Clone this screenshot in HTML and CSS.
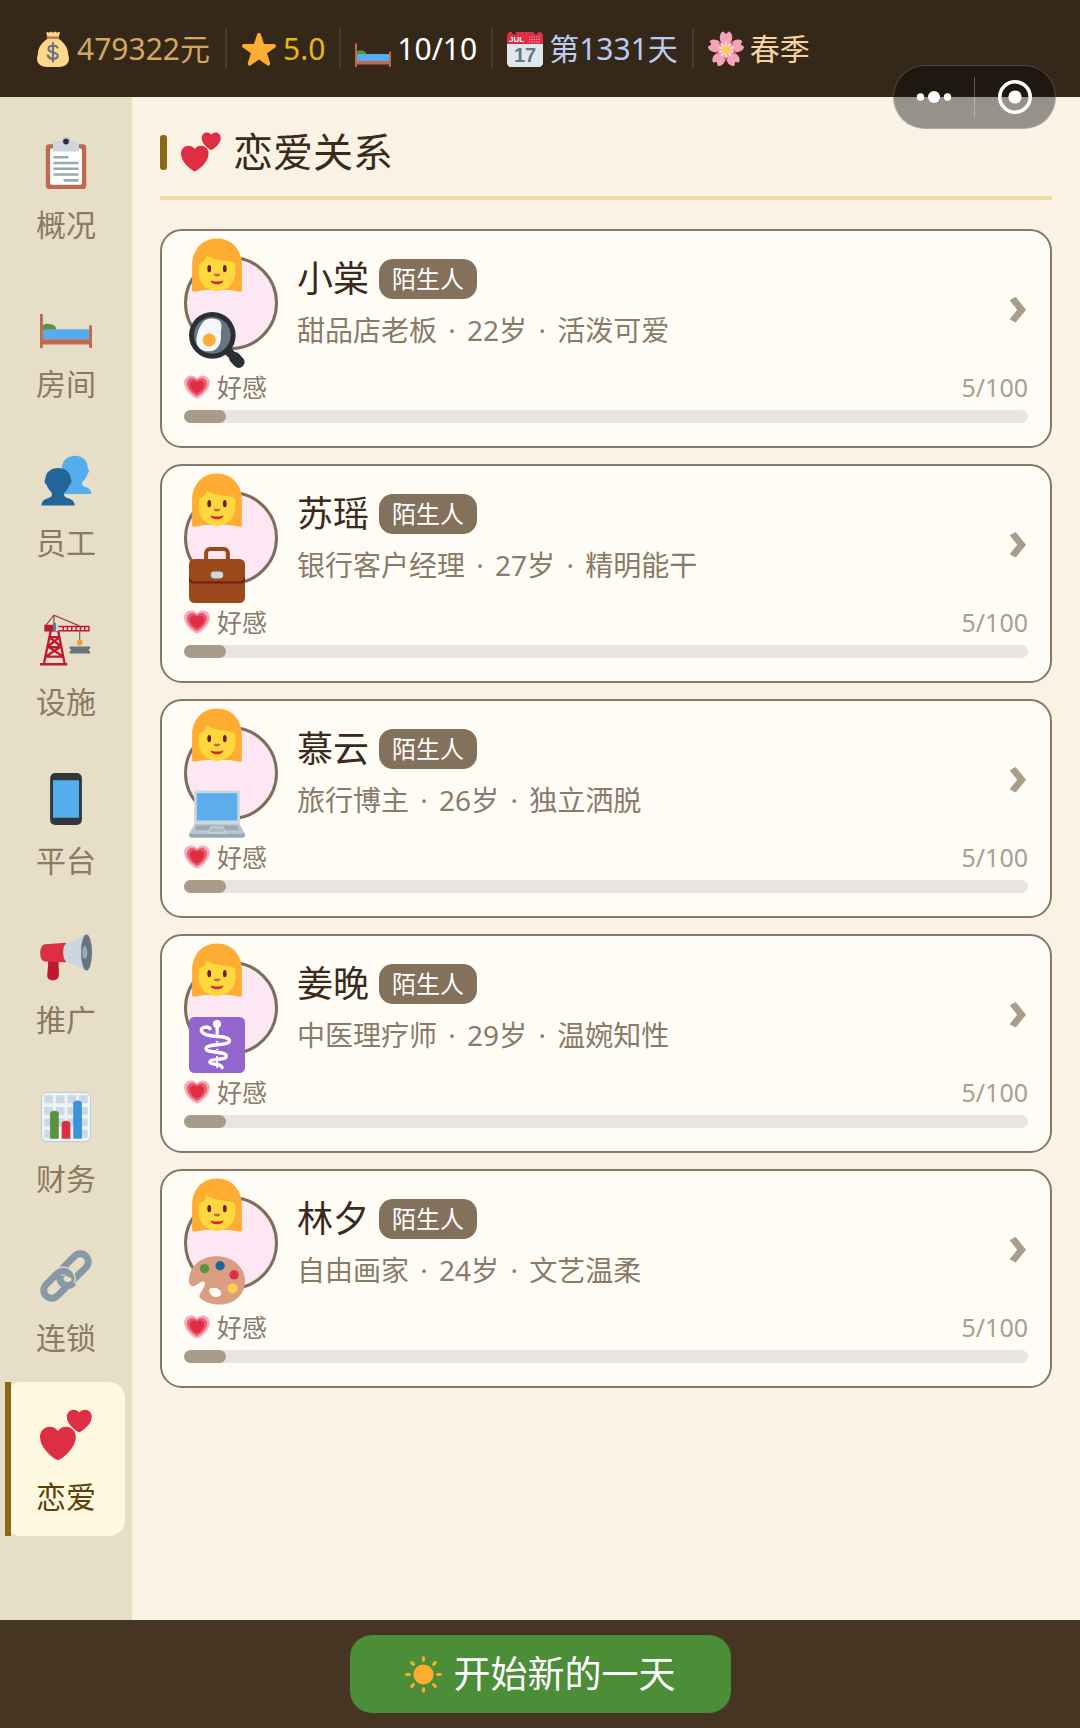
FILE: index.html
```
<!DOCTYPE html>
<html lang="zh-CN">
<head>
    <meta charset="UTF-8">
    <meta name="viewport" content="width=device-width, initial-scale=1.0">
    <title>恋爱关系</title>
    <link rel="stylesheet" href="styles.css">
</head>
<body>
    <!-- shared icons -->
    <svg class="icon-defs" aria-hidden="true">
        <symbol id="heart" viewBox="0 0 36 36">
            <path d="M35.885 11.833c0-5.45-4.418-9.868-9.867-9.868-3.308 0-6.227 1.633-8.018 4.129-1.791-2.496-4.71-4.129-8.017-4.129-5.45 0-9.868 4.417-9.868 9.868 0 .772.098 1.52.266 2.241C1.751 22.587 11.216 31.568 18 34.034c6.783-2.466 16.249-11.447 17.617-19.959.17-.721.268-1.469.268-2.242z"/>
        </symbol>
        <symbol id="hearts" viewBox="0 0 36 36">
            <g fill="#dd2e44">
                <path d="M12.400 35.500C6.800 32.700 0 26 0 19.300c0-4 3-7 6.800-7 2.300 0 4.300 1.100 5.600 2.900 1.300-1.800 3.300-2.900 5.600-2.900 3.800 0 6.800 3 6.800 7 0 6.700-6.800 13.400-12.400 16.200z"/>
                <path d="M27.200 16.200c-3.800-1.900-8.600-6.300-8.600-10.900C18.600 2.500 20.700.5 23.300.5c1.600 0 3 .8 3.900 2 .9-1.200 2.300-2 3.900-2 2.600 0 4.700 2 4.700 4.800 0 4.600-4.800 9-8.600 10.900z"/>
            </g>
        </symbol>
        <symbol id="growing-heart" viewBox="0 0 36 36">
            <use href="#heart" width="36" height="36" fill="#f4abba"/>
            <use href="#heart" x="4" y="4" width="28" height="28" fill="#ea596e"/>
            <use href="#heart" x="8" y="8" width="20" height="20" fill="#dd2e44"/>
        </symbol>
        <symbol id="woman" viewBox="0 0 36 36">
            <path fill="#ffac33" d="M18 .3C8.500.3 2 7.500 2 17.500v16c0 .8.500 1.200 1.300 1.100L10 33.500h16l6.700 1.100c.8.1 1.300-.3 1.300-1.100v-16C34 7.500 27.500.3 18 .3z"/>
            <path fill="#ffd83d" d="M6.500 16.500c2.500-1 4.700-3 5.200-5.300 4 3.300 12 3 16.300 4.300 1.500.5 1.900 1.500 1.900 3V22c0 7-5.500 12-11.900 12S6.200 29 6.200 22z"/>
            <ellipse fill="#662113" cx="13" cy="19.700" rx="1.200" ry="2.300"/>
            <ellipse fill="#662113" cx="23" cy="19.700" rx="1.200" ry="2.300"/>
            <path fill="#c1694f" d="M16.300 23h3.400c.8 0 .5 1.700-1.700 1.700s-2.500-1.700-1.700-1.700z"/>
            <path fill="#df1f32" d="M14 27.300c2 .9 6 .9 8 0 .3 1.200-1.500 2.400-4 2.400s-4.300-1.200-4-2.400z"/>
        </symbol>
        <symbol id="bed" viewBox="0 0 36 36">
            <path fill="#5c913b" d="M2 20.200c2.500-1.700 7-1 8.800 1.300.7 1 .2 2.500-1 2.500H2z"/>
            <path fill="#55acee" d="M2 25.500c0-1.500.8-2.500 2-2.500h29c.8 0 1.500.7 1.500 1.500V30H2z"/>
            <path fill="#c1694f" d="M0 12.500h2V30h32v-9.500h2V36h-2v-2.500H2V36H0z"/>
        </symbol>
    </svg>

    <header class="topbar">
        <div class="stat money">
            <svg viewBox="0 0 36 36" aria-hidden="true">
                <path fill="#fdd888" d="M12 .8l2 1 2-1.300 2 1.300 2-1.300 2 1.300 2.500-1c1.300 2-1.500 4.500-1.200 7C29 11 33 17.500 33 22c0 2 1 3.500 1 6 0 5-5 8-10 8H12c-5 0-10-3-10-8 0-2.500 1-4 1-6 0-4.500 4-11 9.700-14.200C13 5.300 10.500 3 12 .8z"/>
                <rect fill="#bf6952" x="11.500" y="5.500" width="13" height="2.300" rx="1.100"/>
                <path fill="none" stroke="#67757f" stroke-width="2.200" stroke-linecap="round" d="M22.500 16.500c-1-2.300-9-2.800-9 1.400 0 4.500 9.300 2.600 9.300 6.800 0 4.300-8.500 3.900-10-.2M18 12v18.500"/>
            </svg>
            <span>479322元</span>
        </div>
        <div class="stat rating">
            <svg viewBox="0 0 36 36" aria-hidden="true">
                <path fill="#ffac33" d="M27.287 34.627c-.404 0-.806-.124-1.152-.371L18 28.422l-8.135 5.834c-.343.247-.745.371-1.148.371-.406 0-.814-.124-1.158-.381-.69-.498-.979-1.382-.721-2.189l3.034-9.792-8.062-5.681c-.685-.505-.97-1.390-.708-2.199.266-.809 1.016-1.359 1.867-1.363l9.947-.014 3.179-9.549c.277-.803 1.020-1.347 1.872-1.347.848 0 1.600.544 1.872 1.347l3.179 9.549 9.949.014c.849.004 1.600.554 1.864 1.363.265.809-.02 1.694-.705 2.199l-8.061 5.681 3.034 9.792c.259.807-.031 1.691-.718 2.189-.35.253-.756.381-1.161.381z"/>
            </svg>
            <span>5.0</span>
        </div>
        <div class="stat rooms">
            <svg aria-hidden="true"><use href="#bed"/></svg>
            <span>10/10</span>
        </div>
        <div class="stat day">
            <svg viewBox="0 0 36 36" aria-hidden="true">
                <path fill="#e1e8ed" d="M36 32c0 2.200-1.800 4-4 4H4c-2.200 0-4-1.800-4-4V9h36z"/>
                <path fill="#dd2e44" d="M4 1h28c2.200 0 4 1.500 4 4v8H0V5c0-2.500 1.800-4 4-4z"/>
                <g fill="#352819"><circle cx="7" cy="1.500" r="2"/><circle cx="29" cy="1.500" r="2"/></g>
                <path stroke="#f4abba" stroke-width="1.200" stroke-dasharray="1.200 1.200" d="M22 6h12M22 8.500h12M22 11h12"/>
                <text x="2" y="11" class="cal-month">JUL</text>
                <text x="18" y="31" class="cal-day">17</text>
            </svg>
            <span>第1331天</span>
        </div>
        <div class="stat season">
            <svg viewBox="0 0 36 36" aria-hidden="true">
                <g fill="#f4a3b8">
                    <path id="petal" d="M18 17C13.500 14 10.500 8 12.300 3.500c.6-1.700 1.800-2.700 3-3L18 3l2.700-2.500c1.200.3 2.400 1.300 3 3C25.500 8 22.500 14 18 17z"/>
                    <use href="#petal" transform="rotate(72 18 18.500)"/>
                    <use href="#petal" transform="rotate(144 18 18.500)"/>
                    <use href="#petal" transform="rotate(216 18 18.500)"/>
                    <use href="#petal" transform="rotate(288 18 18.500)"/>
                </g>
                <g fill="#d94f83">
                    <circle cx="12.500" cy="12" r="1.700"/><circle cx="23.500" cy="12" r="1.700"/><circle cx="26.500" cy="21.500" r="1.700"/><circle cx="18" cy="27.500" r="1.700"/><circle cx="9.500" cy="21.500" r="1.700"/>
                </g>
                <path stroke="#fff0d8" stroke-width="1.500" stroke-linecap="round" d="M18 11v15M11 16.500l14 4.500M25 16.500L11 21M13.500 24.500l9-12M22.500 24.500l-9-12"/>
                <circle fill="#ffcc4d" cx="18" cy="18.700" r="4.300"/>
            </svg>
            <span>春季</span>
        </div>

        <div class="capsule">
            <button type="button" aria-label="更多">
                <svg viewBox="0 0 36 36" aria-hidden="true"><g fill="#fff"><circle cx="4.500" cy="18" r="3.700"/><circle cx="18" cy="18" r="6"/><circle cx="31.500" cy="18" r="3.700"/></g></svg>
            </button>
            <button type="button" aria-label="关闭">
                <svg viewBox="0 0 36 36" aria-hidden="true"><circle cx="18" cy="18" r="15.200" fill="none" stroke="#fff" stroke-width="3.600"/><circle cx="18" cy="18" r="6.600" fill="#fff"/></svg>
            </button>
        </div>
    </header>

    <div class="layout">
        <nav class="sidebar">
            <a href="#overview">
                <svg viewBox="0 0 36 36" aria-hidden="true">
                    <rect fill="#bf6952" x="4" y="5" width="28" height="31" rx="2.500"/>
                    <rect fill="#fff" x="7" y="8" width="22" height="25" rx="1"/>
                    <circle fill="#b8c4cd" cx="18" cy="3.200" r="3.200"/>
                    <path fill="#ccd6dd" d="M9 5.500C9 4 10 3.200 11 3.200h14c1 0 2 .8 2 2.300V10H9z"/>
                    <circle fill="#292f33" cx="18" cy="3.200" r="2"/>
                    <path stroke="#99aab5" stroke-width="1.800" stroke-linecap="round" d="M10 14h9M10 18h16M10 22h16M10 26h16M17 30h9"/>
                </svg>
                <span>概况</span>
            </a>
            <a href="#rooms">
                <svg aria-hidden="true"><use href="#bed"/></svg>
                <span>房间</span>
            </a>
            <a href="#staff">
                <svg viewBox="0 0 36 36" aria-hidden="true">
                    <path fill="#55acee" d="M15 10C15 4 19 .500 24.500.500c5 0 8.500 3.500 8.500 8 0 .8.900 1.500.9 2.500s-.8 1.300-1.100 2.300c-.5 2.500-2 3.500-3.300 5-1 1.300-.5 3 1.500 3.700 3 .8 4.500 2.500 4.500 5H17z"/>
                    <path fill="#226699" d="M1 35c0-3 2-4.500 5-5.200 2.500-.8 2.800-2.500 1.800-4-1.300-1.500-3-3.300-3.300-5.300-1.300-.5-1.800-3.300-.7-4.300C3.800 12 7.500 9 12.500 9s8.700 3 8.700 7.200c1.100 1 .6 3.800-.7 4.300-.3 2-2 3.800-3.300 5.300-1 1.500-.7 3.200 1.800 4C22 30.500 24 32 24 35z"/>
                </svg>
                <span>员工</span>
            </a>
            <a href="#facilities">
                <svg viewBox="0 0 36 36" aria-hidden="true">
                    <path fill="none" stroke="#9a4052" stroke-width=".8" d="M3.500 8.500L9.700.800l17.500 7.400M9.700 1v8"/>
                    <path fill="none" stroke="#be1931" stroke-width="1.600" d="M7.500 11.500L2.800 34M12.500 11.500L17 34M6.500 16l8 6.500M13.500 16l-8 6.500M5.500 22.500l10.500 7M14.500 22.500l-10.500 7M7 16h6.500M5 23h10M3.700 29.500h12.500"/>
                    <path fill="#be1931" d="M0 34h19v1.600H0zM3 7.500h7v4.700H3z"/>
                    <path fill="none" stroke="#be1931" stroke-width="1" d="M11 8.600h22.800v3H11"/>
                    <path stroke="#be1931" stroke-width="1" d="M16 8.500v3M19 8.500v3M22 8.500v3M25 8.500v3M28 8.500v3M31 8.500v3"/>
                    <path fill="#ccd6dd" d="M9.500 7h3.300v4.800H9.500z"/>
                    <path fill="#66757f" d="M9 6.300h2v6H9zM27 11.500h.9V18H27z"/>
                    <circle fill="#e9a043" cx="27.500" cy="19.800" r="2"/>
                    <path fill="#66757f" d="M20.500 22.500h14.200v1.300l-.8.500v1.200l.8.500v1.300H20.500V26l.8-.5v-1.200l-.8-.5z"/>
                </svg>
                <span>设施</span>
            </a>
            <a href="#platform">
                <svg viewBox="0 0 36 36" aria-hidden="true">
                    <rect fill="#31373d" x="7" y="0" width="22" height="36" rx="3.500"/>
                    <rect fill="#55acee" x="9" y="5" width="18" height="26"/>
                </svg>
                <span>平台</span>
            </a>
            <a href="#promotion">
                <svg viewBox="0 0 36 36" aria-hidden="true">
                    <path fill="#be1931" d="M5.500 20h7.500c-.5 3 .5 7 0 10.500-.3 2-2 3-4 3s-4-1-4-3c0-3.500 1-7 .5-10.500z"/>
                    <path fill="#dd2e44" d="M3.500 8.500L18 7.500V21L3.500 20.500C-1 20-1 9 3.500 8.500z"/>
                    <path fill="#ccd6dd" d="M18 8L32 1.900v24.600l-14-6c-2.700-2.500-2.700-10 0-12.500z"/>
                    <ellipse fill="#66757f" cx="32.200" cy="14.200" rx="3.800" ry="12.500"/>
                    <ellipse fill="#99aab5" cx="31" cy="14.200" rx="1.800" ry="4.500"/>
                </svg>
                <span>推广</span>
            </a>
            <a href="#finance">
                <svg viewBox="0 0 36 36" aria-hidden="true">
                    <rect fill="#eef3f6" stroke="#b8c4cd" stroke-width=".6" x="1" y="1" width="34" height="34" rx="4"/>
                    <path fill="#ccd9e4" d="M3 3h6v5.500H3zM11 3h6v5.500h-6zM19 3h6v5.500h-6zM27 3h6v5.500h-6zM3 11h6v5.500H3zM11 11h6v5.500h-6zM19 11h6v5.500h-6zM27 11h6v5.500h-6zM3 19h6v5.500H3zM11 19h6v5.500h-6zM19 19h6v5.500h-6zM27 19h6v5.500h-6zM3 27h6v5.500H3zM27 27h6v5.500h-6z"/>
                    <path fill="#5c913b" d="M7 33V15.500c0-2.500 6-2.500 6 0V33z"/>
                    <path fill="#dd2e44" d="M15 33V22.500c0-2.500 6-2.500 6 0V33z"/>
                    <path fill="#3b94d9" d="M23 33V8.500c0-2.500 6-2.500 6 0V33z"/>
                </svg>
                <span>财务</span>
            </a>
            <a href="#chain">
                <svg viewBox="0 0 36 36" aria-hidden="true">
                    <g fill="none" stroke="#8899a6" stroke-width="4.800">
                        <rect x="-11" y="-5.500" width="22" height="11" rx="5.500" transform="translate(24 12) rotate(-45)"/>
                        <rect x="-11" y="-5.500" width="22" height="11" rx="5.500" stroke="#e7dec8" stroke-width="6.500" stroke-dasharray="24 60" stroke-dashoffset="-2" transform="translate(12 24) rotate(-45)"/>
                        <rect x="-11" y="-5.500" width="22" height="11" rx="5.500" transform="translate(12 24) rotate(-45)"/>
                        <path stroke="#e7dec8" stroke-width="6.500" d="M16 19.200c1 2.700 3.700 3.600 6.300 2.500"/>
                        <path d="M13.700 17.500c-.8 3.800 2.300 7.600 6.300 7 1.500-.2 2.400-.8 3.500-1.900"/>
                    </g>
                </svg>
                <span>连锁</span>
            </a>
            <a href="#love" class="active" aria-current="page">
                <svg aria-hidden="true"><use href="#hearts"/></svg>
                <span>恋爱</span>
            </a>
        </nav>

        <main class="content">
            <h1><svg aria-hidden="true"><use href="#hearts"/></svg>恋爱关系</h1>

            <a class="card" href="#xiaotang">
                <div class="person">
                    <div class="avatar">
                        <svg aria-hidden="true"><use href="#woman"/></svg>
                        <svg viewBox="0 0 36 36" aria-hidden="true">
                            <path stroke="#292f33" stroke-width="5.500" stroke-linecap="round" d="M25 25l2 2"/>
                            <path stroke="#292f33" stroke-width="7.500" stroke-linecap="round" d="M29.500 29.500l2.500 2.700"/>
                            <circle fill="#292f33" cx="15" cy="15" r="15"/>
                            <circle fill="#66757f" cx="15" cy="15" r="11.800"/>
                            <path fill="#f5f8fa" d="M9.500 6c2.500-3 9-2 10.500 0 1.700 2.700.3 5.500.5 9 .3 4-1 9.500-6.500 10.200C8 26 4 22 4.800 17c.7-4 1.700-7.500 4.700-11z"/>
                            <circle fill="#ffac33" cx="13" cy="18" r="4.200"/>
                        </svg>
                    </div>
                    <div class="info">
                        <h2>小棠 <span class="badge">陌生人</span></h2>
                        <p>甜品店老板 <span class="dot">·</span> 22岁 <span class="dot">·</span> 活泼可爱</p>
                    </div>
                    <span class="arrow">›</span>
                </div>
                <div class="favor"><svg aria-hidden="true"><use href="#growing-heart"/></svg>好感<span>5/100</span></div>
                <div class="bar"><div class="bar-fill" style="width: 5%"></div></div>
            </a>

            <a class="card" href="#suyao">
                <div class="person">
                    <div class="avatar">
                        <svg aria-hidden="true"><use href="#woman"/></svg>
                        <svg viewBox="0 0 36 36" aria-hidden="true">
                            <path fill="none" stroke="#99491b" stroke-width="2.600" d="M11 9V4c0-1.500 1-2.700 2.500-2.700h9C24 1.300 25 2.500 25 4v5"/>
                            <rect fill="#99491b" x="0" y="7.700" width="36" height="28.300" rx="3.500"/>
                            <path fill="none" stroke="#701f10" stroke-width="1.300" d="M0 19.500c0 2 1.300 3.300 3.500 3.300h29c2.200 0 3.500-1.300 3.500-3.300"/>
                            <rect fill="#ccd6dd" x="14" y="15.700" width="8" height="4.500" rx="2.200"/>
                        </svg>
                    </div>
                    <div class="info">
                        <h2>苏瑶 <span class="badge">陌生人</span></h2>
                        <p>银行客户经理 <span class="dot">·</span> 27岁 <span class="dot">·</span> 精明能干</p>
                    </div>
                    <span class="arrow">›</span>
                </div>
                <div class="favor"><svg aria-hidden="true"><use href="#growing-heart"/></svg>好感<span>5/100</span></div>
                <div class="bar"><div class="bar-fill" style="width: 5%"></div></div>
            </a>

            <a class="card" href="#muyun">
                <div class="person">
                    <div class="avatar">
                        <svg aria-hidden="true"><use href="#woman"/></svg>
                        <svg viewBox="0 -2 36 36" aria-hidden="true">
                            <rect fill="#ccd6dd" x="3.300" y="3.500" width="29.500" height="22" rx="1.500"/>
                            <rect fill="#5dadec" x="5" y="5.200" width="26" height="17.500"/>
                            <path fill="#b8c7d3" d="M3.500 25h29L36 31.500H0z"/>
                            <path fill="#9aaab4" d="M5 26h26l1.300 3H3.700zM0 31.300h36v1c0 1-.5 1.500-1.500 1.500h-33c-1 0-1.500-.5-1.500-1.500z"/>
                            <path fill="#aebbc1" stroke="#ccd6dd" stroke-width=".7" d="M14 27h8l1.500 3.700h-11z"/>
                        </svg>
                    </div>
                    <div class="info">
                        <h2>慕云 <span class="badge">陌生人</span></h2>
                        <p>旅行博主 <span class="dot">·</span> 26岁 <span class="dot">·</span> 独立洒脱</p>
                    </div>
                    <span class="arrow">›</span>
                </div>
                <div class="favor"><svg aria-hidden="true"><use href="#growing-heart"/></svg>好感<span>5/100</span></div>
                <div class="bar"><div class="bar-fill" style="width: 5%"></div></div>
            </a>

            <a class="card" href="#jiangwan">
                <div class="person">
                    <div class="avatar">
                        <svg aria-hidden="true"><use href="#woman"/></svg>
                        <svg viewBox="0 0 36 36" aria-hidden="true">
                            <rect fill="#9266cc" width="36" height="36" rx="3.500"/>
                            <circle fill="#fff" cx="18" cy="4.500" r="2.600"/>
                            <path fill="#fff" d="M17 6h2.200l-.6 27h-1z"/>
                            <path fill="none" stroke="#9266cc" stroke-width="4" d="M12 12c4 2 14 1 14 4.500M24 17.500c-5 1.500-12 .5-12 3.500M13 22c3 1.500 10 1 10 3.500"/>
                            <path fill="none" stroke="#fff" stroke-width="2.200" stroke-linecap="round" d="M13.500 7.500c-1.500-1.800-6.500-1-5.500 1.500.8 2 4 3.200 10 3.500 5 .2 8 1 8 2.800 0 3.700-15 1.500-15 5 0 3.200 13 1.500 13 4.700 0 3-10.500 1.500-10.500 4 0 2.200 7 .5 7.800 3.500"/>
                        </svg>
                    </div>
                    <div class="info">
                        <h2>姜晚 <span class="badge">陌生人</span></h2>
                        <p>中医理疗师 <span class="dot">·</span> 29岁 <span class="dot">·</span> 温婉知性</p>
                    </div>
                    <span class="arrow">›</span>
                </div>
                <div class="favor"><svg aria-hidden="true"><use href="#growing-heart"/></svg>好感<span>5/100</span></div>
                <div class="bar"><div class="bar-fill" style="width: 5%"></div></div>
            </a>

            <a class="card" href="#linxi">
                <div class="person">
                    <div class="avatar">
                        <svg aria-hidden="true"><use href="#woman"/></svg>
                        <svg viewBox="0 0 36 36" aria-hidden="true">
                            <path fill="#d99e82" fill-rule="evenodd" d="M18 2.800c10 0 18 7 18 16 0 8.500-6.500 15-16.500 15-5.500 0-10.500-2-13-5 .5-3 5-7.500 3.500-9.500-1.500-1.800-4.500 2.700-7.500 2.700-1.700 0-2.500-1.500-2.500-4C0 9 8 2.800 18 2.800zM13 25c.3 2 2.300 4 4.500 4 2 0 3.500-1 3.200-2.700-.4-2-2.700-3.300-4.700-3.300-1.800 0-3.200.5-3 2z"/>
                            <circle fill="#5c913b" cx="10" cy="10.700" r="3"/>
                            <circle fill="#226699" cx="20" cy="8.800" r="3"/>
                            <circle fill="#dd2e44" cx="29" cy="14.700" r="3"/>
                            <circle fill="#ffcc4d" cx="28" cy="23.500" r="3.200"/>
                        </svg>
                    </div>
                    <div class="info">
                        <h2>林夕 <span class="badge">陌生人</span></h2>
                        <p>自由画家 <span class="dot">·</span> 24岁 <span class="dot">·</span> 文艺温柔</p>
                    </div>
                    <span class="arrow">›</span>
                </div>
                <div class="favor"><svg aria-hidden="true"><use href="#growing-heart"/></svg>好感<span>5/100</span></div>
                <div class="bar"><div class="bar-fill" style="width: 5%"></div></div>
            </a>
        </main>
    </div>

    <footer class="bottombar">
        <button type="button" class="next-day">
            <svg viewBox="0 0 36 36" aria-hidden="true">
                <path stroke="#ffac33" stroke-width="3" stroke-linecap="round" d="M18 1.700v2.500M18 31.800v2.500M1.700 18h2.500M31.800 18h2.500M6.500 6.500l1.700 1.700M27.800 27.800l1.700 1.700M6.500 29.500l1.700-1.700M27.800 8.200l1.700-1.700"/>
                <circle fill="#ffac33" cx="18" cy="18" r="9.800"/>
            </svg>
            开始新的一天
        </button>
    </footer>
</body>
</html>
```
FILE: styles.css
```
* {
    box-sizing: border-box;
}

body {
    margin: 0;
    min-height: 100vh;
    display: flex;
    flex-direction: column;
    font-family: "Noto Sans", "Noto Sans CJK SC", sans-serif;
    background-color: #faf3e5;
    color: #3a2a1c;
}

a {
    color: inherit;
    text-decoration: none;
}

button {
    border: none;
    font-family: inherit;
    cursor: pointer;
}

svg {
    flex: none;
}

.icon-defs {
    position: absolute;
    width: 0;
    height: 0;
}

/* top bar */
.topbar {
    position: relative;
    display: flex;
    align-items: center;
    height: 97px;
    padding-left: 20px;
    background-color: #352819;
    font-size: 30px;
    line-height: 39px;
}

.stat {
    display: flex;
    align-items: center;
    gap: 6px;
    padding: 0 14px;
}

.stat:first-child {
    padding: 0 15px;
}

.stat + .stat {
    border-left: 2px solid #4a3c2b;
}

.stat svg {
    width: 36px;
    height: 36px;
}

.money { color: #d4a762; }
.rating { color: #e6b812; }
.rooms { color: #fff; }
.day { color: #bccbf0; }
.season { color: #f5d5a5; }

.cal-month {
    font: bold 8px "Liberation Sans", sans-serif;
    fill: #fff;
}

.cal-day {
    font: bold 20px "Liberation Sans", sans-serif;
    fill: #66757f;
    text-anchor: middle;
}

.capsule {
    position: absolute;
    top: 65px;
    right: 24px;
    display: flex;
    align-items: center;
    width: 163px;
    height: 64px;
    border: 1px solid rgba(255, 255, 255, 0.2);
    border-radius: 32px;
    background-color: rgba(0, 0, 0, 0.4);
}

.capsule button {
    flex: 1;
    height: 40px;
    padding: 2px 0;
    background: none;
}

.capsule button + button {
    border-left: 1px solid rgba(255, 255, 255, 0.3);
}

.capsule svg {
    display: block;
    width: 36px;
    height: 36px;
    margin: 0 auto;
}

/* layout */
.layout {
    flex: 1;
    display: flex;
}

.sidebar {
    width: 132px;
    flex: none;
    display: flex;
    flex-direction: column;
    gap: 5px;
    padding: 13px 7px 0 5px;
    background-color: #e7dec8;
}

.sidebar a {
    position: relative;
    display: flex;
    flex-direction: column;
    align-items: center;
    gap: 14px;
    padding: 27px 0 17px 2px;
    border-radius: 16px;
    font-size: 30px;
    line-height: 44px;
    color: #8b7960;
}

.sidebar svg {
    width: 52px;
    height: 52px;
}

.sidebar .active {
    background-color: #fff8e1;
    color: #5b4108;
}

.sidebar .active::before {
    content: "";
    position: absolute;
    top: 0;
    bottom: 0;
    left: 0;
    width: 6px;
    background-color: #8b6914;
}

.content {
    flex: 1;
    display: flex;
    flex-direction: column;
    gap: 16px;
    padding: 28px 28px 24px;
}

h1 {
    display: flex;
    align-items: center;
    margin: 0 0 13px;
    padding-bottom: 17px;
    border-bottom: 4px solid #f0dca5;
    font-size: 40px;
    font-weight: normal;
    line-height: 54px;
}

h1::before {
    content: "";
    width: 7px;
    height: 35px;
    margin-right: 14px;
    border-radius: 3px;
    background-color: #8b6914;
}

h1 svg {
    width: 40px;
    height: 40px;
    margin-right: 12px;
}

/* cards */
.card {
    display: block;
    padding: 25px 22px 23px;
    border: 2px solid #857866;
    border-radius: 22px;
    background-color: #fffcf5;
}

.person {
    display: flex;
    align-items: center;
    gap: 19px;
}

.avatar {
    display: flex;
    flex-direction: column;
    justify-content: center;
    gap: 18px;
    flex: none;
    width: 94px;
    height: 94px;
    padding-left: 2px;
    border: 3px solid #7d6d5b;
    border-radius: 50%;
    background-color: #fde7f3;
}

.avatar svg {
    width: 56px;
    height: 56px;
}

.info {
    flex: 1;
}

h2 {
    display: flex;
    align-items: center;
    gap: 10px;
    margin: 0;
    font-size: 36px;
    font-weight: normal;
    line-height: 46px;
}

.badge {
    padding: 0 13px;
    border-radius: 14px;
    background-color: #84715c;
    color: #fff;
    font-size: 24px;
    line-height: 40px;
}

.info p {
    margin: 8px 0 0;
    font-size: 28px;
    line-height: 40px;
    color: #8a7a68;
}

.dot {
    margin: 0 4px;
}

.arrow {
    font-size: 56px;
    font-weight: bold;
    line-height: 58px;
    color: #a99c8a;
}

.favor {
    display: flex;
    align-items: center;
    margin: 19px 0 5px;
    font-size: 25px;
    line-height: 36px;
    color: #8a7a68;
}

.favor svg {
    width: 26px;
    height: 26px;
    margin-right: 7px;
}

.favor span {
    margin-left: auto;
    color: #a99f91;
}

.bar {
    height: 13px;
    border-radius: 7px;
    background-color: #e9e4e1;
}

.bar-fill {
    height: 100%;
    border-radius: 7px;
    background-color: #a99b89;
}

/* bottom bar */
.bottombar {
    display: flex;
    justify-content: center;
    padding: 15px;
    background-color: #473524;
}

.next-day {
    display: flex;
    align-items: center;
    gap: 12px;
    padding: 12px 55px;
    border-radius: 22px;
    background-color: #4c8d38;
    color: #fff;
    font-size: 37px;
    line-height: 54px;
}

.next-day svg {
    width: 37px;
    height: 37px;
}
```
